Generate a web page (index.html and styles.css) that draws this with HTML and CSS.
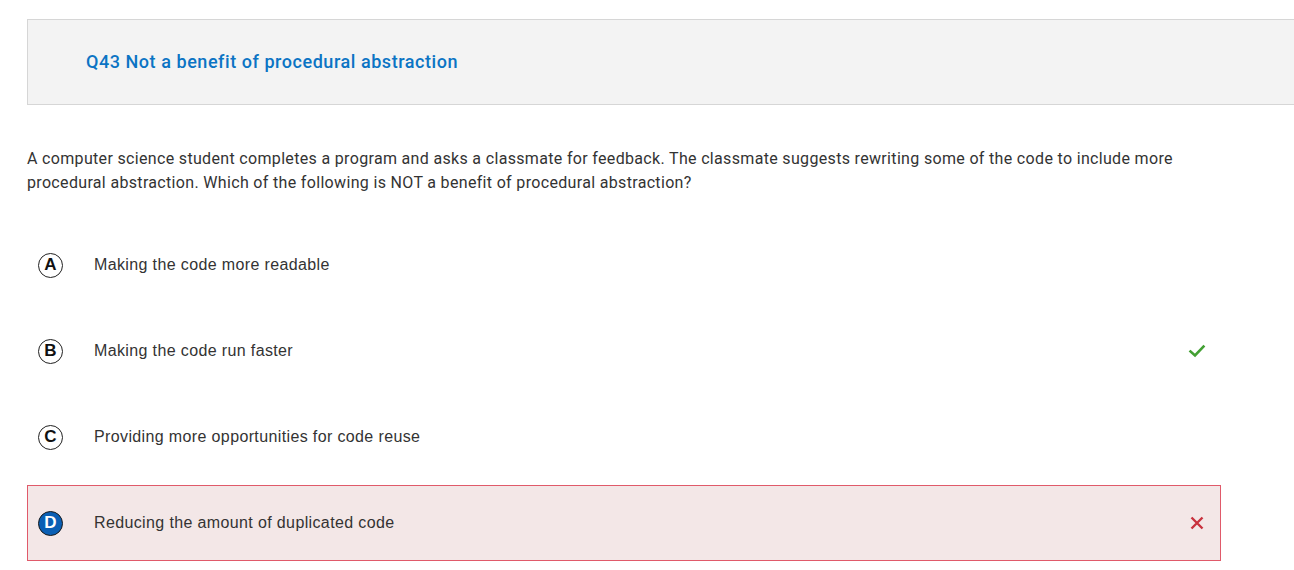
FILE: index.html
```html
<!DOCTYPE html>
<html>
<head>
<meta charset="utf-8">
<link rel="stylesheet" href="styles.css">
</head>
<body>
<div class="page">
  <div class="header">
    <h1 class="title">Q43 Not a benefit of procedural abstraction</h1>
  </div>
  <p class="question">A computer science student completes a program and asks a classmate for feedback. The classmate suggests rewriting some of the code to include more procedural abstraction. Which of the following is NOT a benefit of procedural abstraction?</p>
  <div class="options">
    <div class="option">
      <span class="letter">A</span>
      <span class="text">Making the code more readable</span>
    </div>
    <div class="option">
      <span class="letter">B</span>
      <span class="text">Making the code run faster</span>
      <svg class="mark" width="18" height="16" viewBox="0 0 18 16"><path d="M2.5 8.5 L7 12.5 L15.5 3.5" fill="none" stroke="#43a033" stroke-width="2.6" stroke-linecap="square"/></svg>
    </div>
    <div class="option">
      <span class="letter">C</span>
      <span class="text">Providing more opportunities for code reuse</span>
    </div>
    <div class="option selected">
      <span class="letter filled">D</span>
      <span class="text">Reducing the amount of duplicated code</span>
      <svg class="mark" width="18" height="16" viewBox="0 0 18 16"><path d="M3.5 2.5 L14.5 13.5 M14.5 2.5 L3.5 13.5" fill="none" stroke="#c8323e" stroke-width="2.4"/></svg>
    </div>
  </div>
</div>
</body>
</html>
```
FILE: styles.css
```css
html, body {
  margin: 0;
  padding: 0;
  background: #ffffff;
}
.page {
  padding: 19px 0 0 27px;
}
.header {
  height: 84px;
  background: #f3f3f3;
  border: 1px solid #d6d6d6;
  border-right: none;
  display: flex;
  align-items: center;
  padding-left: 58px;
}
.title {
  margin: 0;
  font-family: Roboto, "Liberation Sans", sans-serif;
  font-weight: 500;
  font-size: 18px;
  letter-spacing: 0.55px;
  color: #0b74c4;
  position: relative;
  top: -1px;
}
.question {
  margin: 42px 0 0 0;
  width: 1180px;
  font-family: Roboto, "Liberation Sans", sans-serif;
  font-size: 16px;
  letter-spacing: 0.33px;
  line-height: 24px;
  color: #333333;
}
.options {
  margin-top: 32px;
  width: 1194px;
  display: flex;
  flex-direction: column;
  gap: 10px;
}
.option {
  height: 76px;
  box-sizing: border-box;
  display: flex;
  align-items: center;
  padding-left: 10px;
  padding-right: 14px;
  border: 1px solid transparent;
  font-family: "Liberation Sans", Arial, sans-serif;
  font-size: 16px;
  letter-spacing: 0.37px;
  color: #333333;
}
.option.selected {
  background: #f3e7e7;
  border-color: #e05a6a;
}
.letter {
  width: 25px;
  height: 25px;
  box-sizing: border-box;
  border: 1.5px solid #222222;
  border-radius: 50%;
  display: flex;
  align-items: center;
  justify-content: center;
  font-weight: bold;
  font-size: 17px;
  letter-spacing: 0;
  color: #111111;
}
.letter.filled {
  background: #0a5fb4;
  border-color: #1a1a1a;
  color: #ffffff;
}
.text {
  margin-left: 31px;
  flex: 1;
}
.mark {
  display: block;
}
```
